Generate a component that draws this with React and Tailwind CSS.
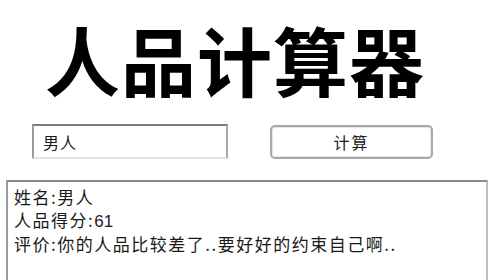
export default function App() {
  const cjk = { fontFamily: '"Noto Sans CJK SC", "Liberation Sans", sans-serif' };
  return (
    <div className="w-[491px] h-[280px] bg-white overflow-hidden text-[#1a1a1a]" style={cjk}>
      <h1 className="pl-[45px] pt-[21px] h-[124px] text-[75px] font-bold leading-[75px] text-black tracking-[1px]">
        人品计算器
      </h1>
      <div className="flex items-start pl-[32px]">
        <input
          readOnly
          value="男人"
          className="w-[196px] h-[35px] border-2 border-t-[#7d7d7d] border-l-[#9a9a9a] border-r-[#a8a8a8] border-b-[#e4e4e4] bg-white pl-[9px] text-[16px] tracking-[1px] text-[#1a1a1a] outline-none"
        />
        <button className="ml-[42px] mt-[1px] w-[163px] h-[34px] rounded-[5px] border-2 border-[#a9a9a9] bg-white text-[16px] tracking-[2px] text-[#1a1a1a] flex items-center justify-center shadow-[inset_0_0_0_1px_#e6e6e6]">
          计算
        </button>
      </div>
      <div className="mt-[21px] ml-[6px] w-[482px] h-[120px] border-2 border-t-[#8c8c8c] border-l-[#9c9c9c] border-r-[#bdbdbd] border-b-[#d0d0d0] pl-[6px] pt-[4px] text-[17px] leading-[22.5px] tracking-[1.5px] text-[#1a1a1a]">
        <div>姓名:男人</div>
        <div>
          人品得分:<span className="tracking-normal font-['Liberation_Sans']">61</span>
        </div>
        <div>评价:你的人品比较差了..要好好的约束自己啊..</div>
      </div>
    </div>
  );
}
